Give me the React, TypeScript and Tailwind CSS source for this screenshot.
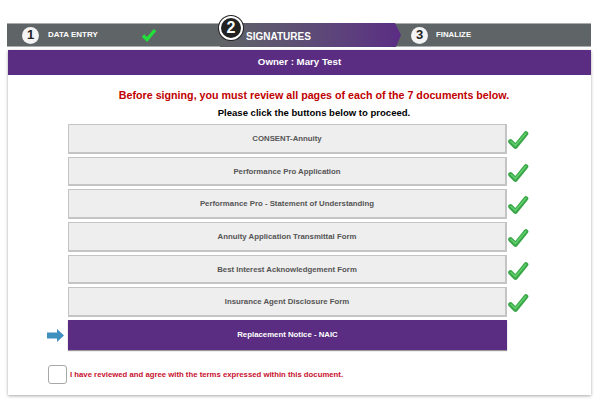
const docs = [
  "CONSENT-Annuity",
  "Performance Pro Application",
  "Performance Pro - Statement of Understanding",
  "Annuity Application Transmittal Form",
  "Best Interest Acknowledgement Form",
  "Insurance Agent Disclosure Form",
];

function Check() {
  return (
    <svg width="21" height="20" viewBox="0 0 21 20" className="shrink-0 relative top-[1px]">
      <path d="M2.5 11.5 L7.5 16.5 L18 3.5" fill="none" stroke="#3aa648" strokeWidth="4.6" strokeLinecap="round" strokeLinejoin="round" />
      <path d="M3 11.5 L7.5 15.6 L17.6 3.4" fill="none" stroke="#5fcf6c" strokeWidth="1.6" strokeLinecap="round" strokeLinejoin="round" />
    </svg>
  );
}

export default function App() {
  return (
    <div className="w-[605px] h-[400px] overflow-hidden bg-white pt-[23px] pl-[7px] font-['Liberation_Sans',Arial,sans-serif]">
      <div className="w-[584px] h-[24px] flex bg-[#5f6466] border-y border-[#a9acad]">
        <div className="w-[213px] flex items-center pl-[15px]">
          <div className="w-[17px] h-[17px] rounded-full bg-[#f4f4f4] flex items-center justify-center text-[#222] text-[13px] font-bold">1</div>
          <span className="ml-[9px] text-white text-[8px] font-bold">DATA ENTRY</span>
          <svg width="16" height="14" viewBox="0 0 16 14" className="ml-[43px]">
            <path d="M2 7.5 L6 11.5 L14 2" fill="none" stroke="#22e03a" strokeWidth="3.4" />
          </svg>
        </div>
        <div className="relative w-[181px] h-[24px] -my-px bg-gradient-to-r from-[#5f6466] to-[#5b2c84] [clip-path:polygon(0_0,calc(100%-6px)_0,100%_50%,calc(100%-5px)_100%,0_100%)]">
          <span className="absolute left-[26px] top-[6px] text-white text-[10px] font-bold">SIGNATURES</span>
        </div>
        <div className="flex items-center pl-[10px]">
          <div className="w-[17px] h-[17px] rounded-full bg-[#f4f4f4] flex items-center justify-center text-[#222] text-[13px] font-bold">3</div>
          <span className="ml-[8px] text-white text-[7.8px] font-bold">FINALIZE</span>
        </div>
      </div>
      <div className="absolute left-[219px] top-[16px] w-[24px] h-[24px] rounded-full bg-[#222] border-2 border-white flex items-center justify-center text-white text-[16px] font-bold shadow-[0_0_0_1px_#222]">2</div>

      <div className="w-[583px] h-[345px] mt-[3px] ml-px bg-white shadow-[0_1px_3px_rgba(0,0,0,0.35)]">
        <div className="h-[25px] bg-[#5a2d82] flex items-center justify-center text-white text-[9.7px] font-bold">Owner : Mary Test</div>
        <p className="mt-[14px] pl-[29px] text-center text-[#c00000] text-[10.7px] leading-[13px] font-bold">Before signing, you must review all pages of each of the 7 documents below.</p>
        <p className="mt-[5px] pl-[29px] text-center text-black text-[9.55px] leading-[12px] font-bold">Please click the buttons below to proceed.</p>
        <div className="mt-[5px] ml-[60px] flex flex-col gap-[3px]">
          {docs.map((d) => (
            <div key={d} className="flex items-center">
              <div className="w-[439px] h-[29.7px] pt-[1px] bg-[#eeeeee] border border-[#c4c4c4] border-r-2 border-b-2 flex items-center justify-center text-[#555] text-[7.8px] font-bold">{d}</div>
              <div className="ml-[1px]"><Check /></div>
            </div>
          ))}
          <div className="relative w-[439px] h-[30px] bg-[#5a2d82] shadow-[0_1px_1px_rgba(0,0,0,0.4)] flex items-center justify-center text-white text-[7.8px] font-bold">
            Replacement Notice - NAIC
            <svg width="18" height="13" viewBox="0 0 18 13" className="absolute left-[-21px] top-[9px]">
              <path d="M0 3.5 H10 V0 L17 6.5 L10 13 V9.5 H0 Z" fill="#3f8fbf" />
            </svg>
          </div>
        </div>
        <div className="mt-[15px] ml-[40px] flex items-center">
          <div className="w-[19px] h-[19px] rounded-[3px] bg-white border border-[#a8a8a8]"></div>
          <span className="ml-[3px] text-[#c8102e] text-[7.76px] font-bold">I have reviewed and agree with the terms expressed within this document.</span>
        </div>
      </div>
    </div>
  );
}
